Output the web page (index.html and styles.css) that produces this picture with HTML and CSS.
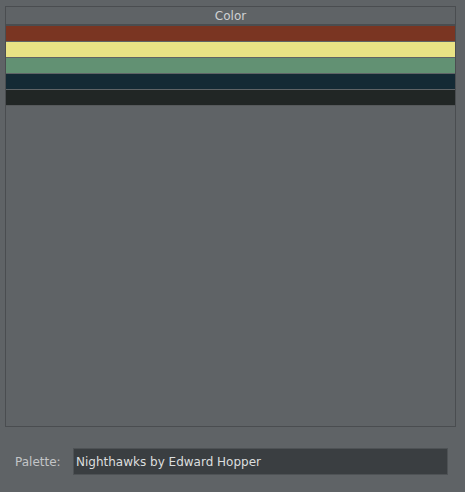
FILE: index.html
```html
<!DOCTYPE html>
<html>
<head>
<meta charset="utf-8">
<link rel="stylesheet" href="styles.css">
</head>
<body>
<div class="panel">
  <div class="header">Color</div>
  <div class="rows">
    <div class="row c1"></div>
    <div class="row c2"></div>
    <div class="row c3"></div>
    <div class="row c4"></div>
    <div class="row c5"></div>
  </div>
</div>
<div class="footer">
  <span class="label">Palette:</span>
  <div class="input">Nighthawks by Edward Hopper</div>
</div>
</body>
</html>
```
FILE: styles.css
```css
html, body {
  margin: 0;
  padding: 0;
  background: #5f6366;
  font-family: "DejaVu Sans", sans-serif;
  font-size: 12px;
}
.panel {
  margin: 6px 0 0 5px;
  width: 449px;
  height: 419px;
  border: 1px solid #4a4d50;
  display: flex;
  flex-direction: column;
}
.header {
  height: 17px;
  line-height: 19px;
  text-align: center;
  color: #cfd1d3;
  border-bottom: 2px solid #4a4d50;
}
.rows {
  display: flex;
  flex-direction: column;
  gap: 1px;
}
.row {
  height: 15px;
}
.c1 { background: #7a3522; }
.c2 { background: #e9e385; }
.c3 { background: #629173; }
.c4 { background: #142a35; }
.c5 { background: #212625; border-bottom: 1px solid #56595b; }
.footer {
  display: flex;
  align-items: center;
  margin: 21px 0 0 0;
  height: 27px;
}
.label {
  margin-left: 15px;
  width: 58px;
  color: #c3c5c7;
  font-size: 12px;
}
.input {
  width: 371px;
  height: 25px;
  border: 1px solid #4e5255;
  background: #3a3e41;
  color: #dcdedf;
  font-size: 12px;
  line-height: 26px;
  padding-left: 2px;
  box-sizing: content-box;
}
```
